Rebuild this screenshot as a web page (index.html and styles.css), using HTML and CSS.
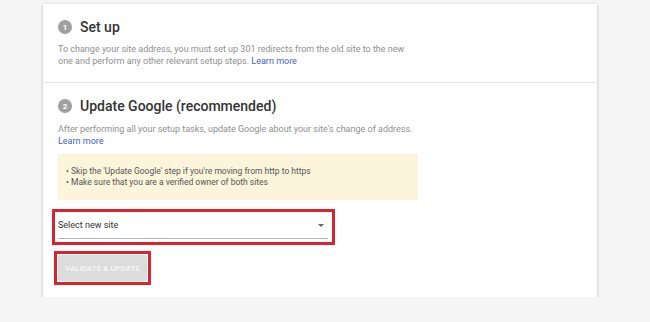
FILE: index.html
```html
<!DOCTYPE html>
<html lang="en">
<head>
    <meta charset="UTF-8">
    <title>Change of address</title>
    <link rel="stylesheet" href="styles.css">
</head>
<body>
    <div class="card">
        <div class="step step-first">
            <div class="step-head">
                <span class="step-num">1</span>
                <span class="step-title">Set up</span>
            </div>
            <p class="step-text">To change your site address, you must set up 301 redirects from the old site to the new<br>one and perform any other relevant setup steps. <a href="#">Learn more</a></p>
        </div>
        <div class="step">
            <div class="step-head">
                <span class="step-num">2</span>
                <span class="step-title">Update Google (recommended)</span>
            </div>
            <p class="step-text">After performing all your setup tasks, update Google about your site's change of address.<br><a href="#">Learn more</a></p>
            <div class="notice">
                <div>• Skip the 'Update Google' step if you're moving from http to https</div>
                <div>• Make sure that you are a verified owner of both sites</div>
            </div>
            <div class="mark mark-select">
                <div class="select">
                    <span>Select new site</span>
                    <span class="arrow"></span>
                </div>
            </div>
            <div class="mark mark-btn">
                <button class="validate-btn">VALIDATE &amp; UPDATE</button>
            </div>
        </div>
    </div>
</body>
</html>
```

FILE: styles.css
```css
body {
    margin: 0;
    background: #f5f5f5;
    font-family: Roboto, 'Liberation Sans', sans-serif;
}
.card {
    margin: 4px 0 0 43px;
    width: 554px;
    background: #fff;
    box-shadow: 0 1px 3px rgba(0, 0, 0, 0.25);
}
.step {
    padding: 16px 15px 12px;
}
.step-first {
    padding-bottom: 15px;
    border-bottom: 1px solid #e3e3e3;
}
.step-head {
    display: flex;
    align-items: center;
    gap: 8px;
    height: 14px;
}
.step-num {
    width: 14px;
    height: 14px;
    border-radius: 50%;
    background: #a0a0a0;
    color: #fff;
    font-size: 8px;
    font-weight: bold;
    display: flex;
    align-items: center;
    justify-content: center;
}
.step-title {
    font-size: 14px;
    font-weight: 500;
    color: #333;
}
.step-text {
    margin: 9px 0 0;
    font-size: 9px;
    line-height: 12px;
    color: #8f8f8f;
}
.step + .step .step-text {
    margin-top: 10px;
}
.step-text a {
    color: #4062cf;
    text-decoration: none;
}
.notice {
    margin-top: 7px;
    width: 344px;
    padding: 12px 8px;
    background: #fcf5dc;
    font-size: 8.5px;
    line-height: 11px;
    color: #555;
}
.mark {
    border: 3px solid #d9232e;
    box-sizing: border-box;
}
.mark-select {
    margin: 9px 0 0 -6px;
    width: 283px;
    height: 36px;
    padding: 0 4px 0 3px;
}
.select {
    display: flex;
    align-items: center;
    justify-content: space-between;
    height: 26px;
    padding: 0 4px 0 0;
    border-bottom: 1px solid #b5b5b5;
    font-size: 9px;
    color: #333;
}
.arrow {
    width: 0;
    height: 0;
    border-left: 3px solid transparent;
    border-right: 3px solid transparent;
    border-top: 3px solid #666;
}
.mark-btn {
    margin: 6px 0 0 -4px;
    width: 97px;
    height: 34px;
    padding: 1px;
}
.validate-btn {
    width: 89px;
    height: 26px;
    border: none;
    border-radius: 2px;
    background: #dcdcdc;
    color: #f7f7f7;
    font-family: Roboto, 'Liberation Sans', sans-serif;
    font-size: 8px;
    font-weight: 500;
    padding: 0;
}
```
